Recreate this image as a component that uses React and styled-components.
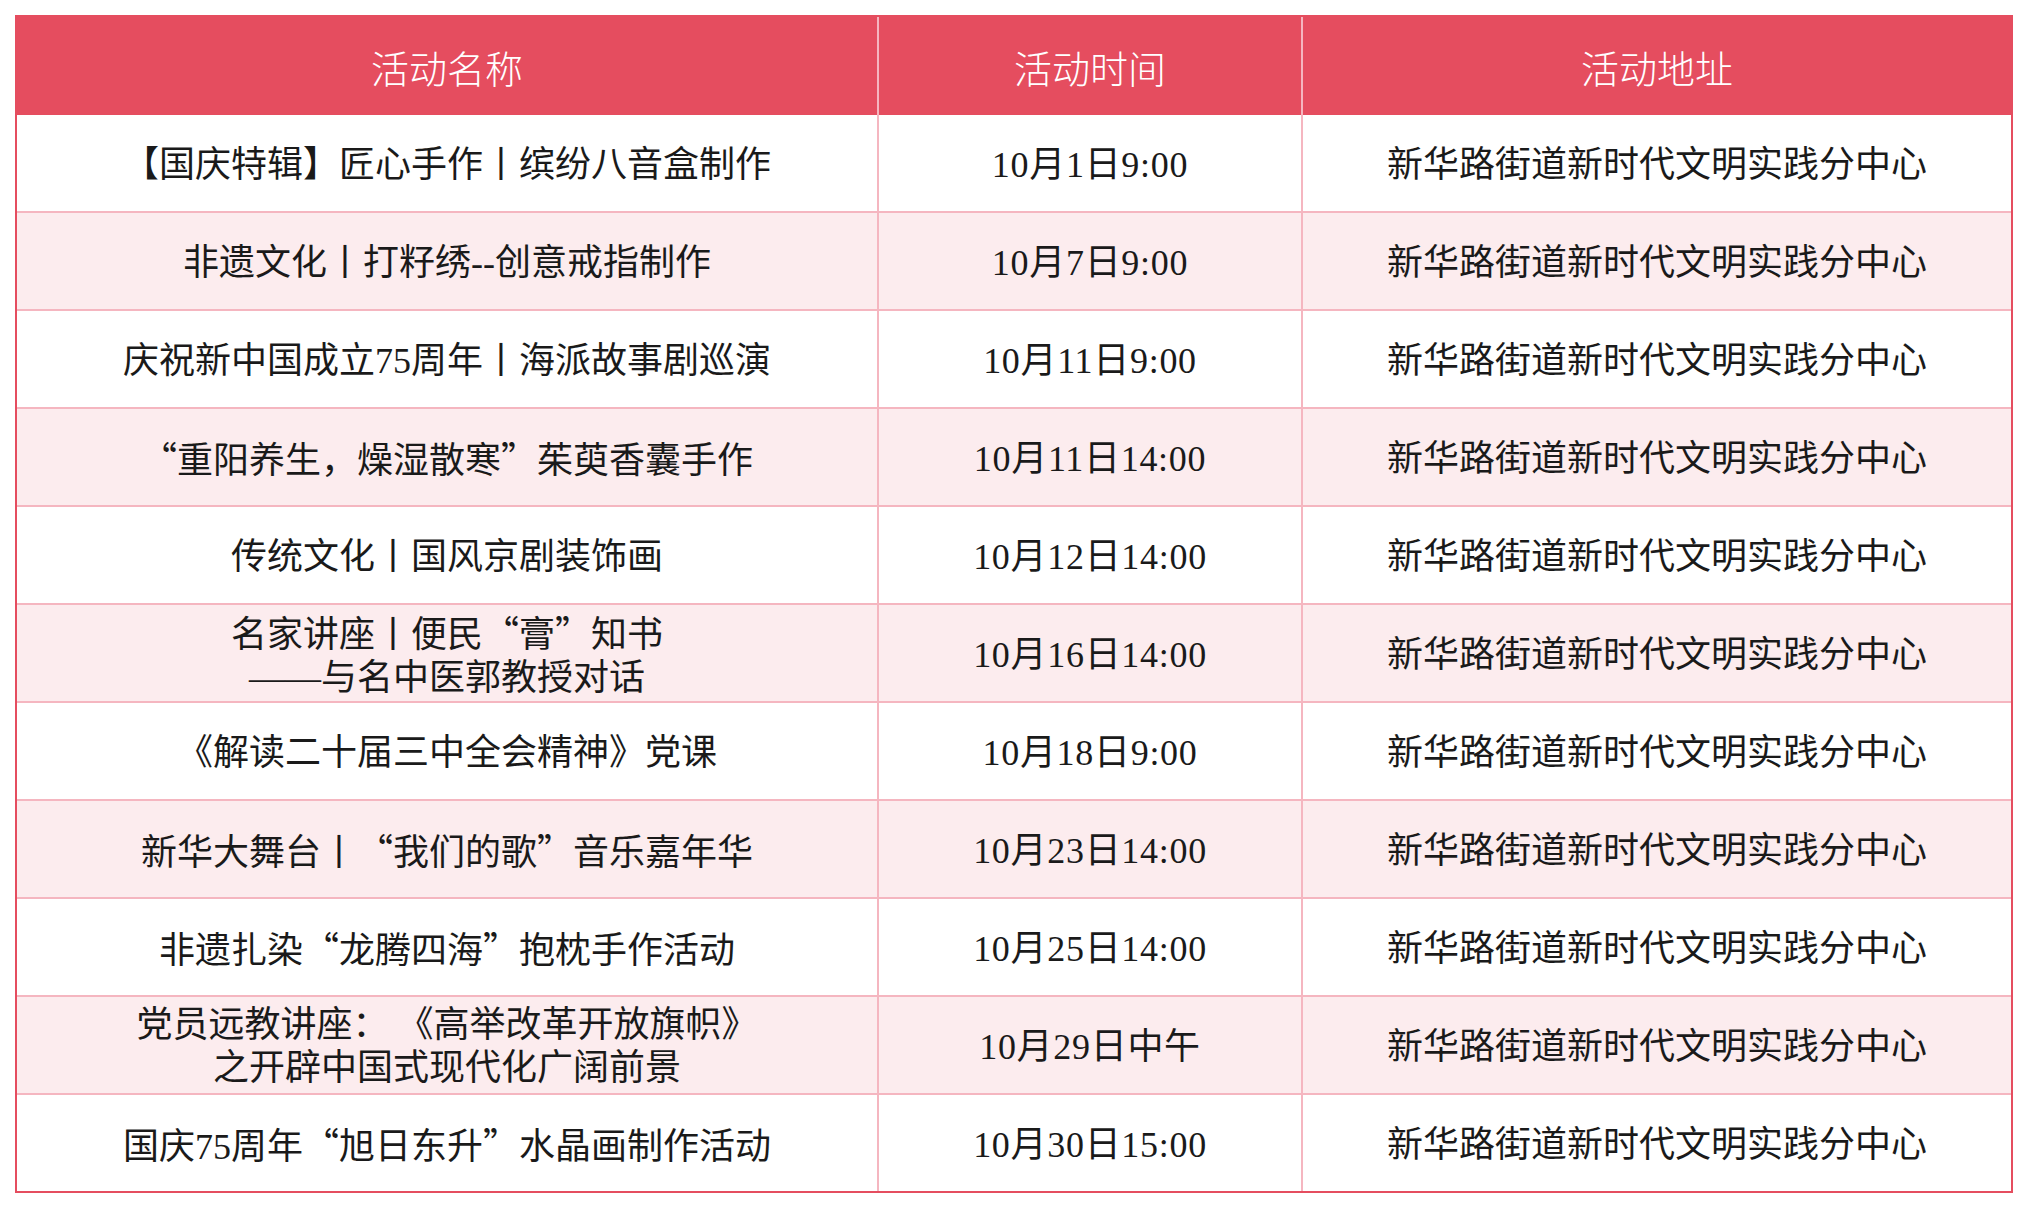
import React from 'react';
import styled, { createGlobalStyle } from 'styled-components';

const GlobalStyle = createGlobalStyle`
  body {
    margin: 0;
    background: #fff;
    font-family: "Liberation Serif", "Noto Sans CJK SC", serif;
  }
`;

const Page = styled.div`
  padding: 15px;
`;

const Table = styled.div`
  width: 1998px;
  box-sizing: border-box;
  border: 2px solid #e54d5f;
`;

const Row = styled.div`
  display: grid;
  grid-template-columns: 860px 422px 708px;
  column-gap: 2px;
  background: #f5b6c0; /* pink grid lines */
`;

const HeadCell = styled.div`
  height: 98px;
  background: #e54d5f;
  color: #fff;
  display: flex;
  align-items: center;
  justify-content: center;
  font-size: 38px;
  font-weight: 300;
  font-family: "Noto Sans CJK SC", sans-serif;
`;

const Body = styled.div`
  display: flex;
  flex-direction: column;
  gap: 2px;
  background: #f5b6c0;
`;

const Cell = styled.div`
  height: 96px;
  box-sizing: border-box;
  padding-top: 4px;
  background: ${(p) => (p.$alt ? '#fcecee' : '#fff')};
  color: #1a1a1a;
  display: flex;
  flex-direction: column;
  align-items: center;
  justify-content: center;
  text-align: center;
  font-family: "Liberation Serif", "Noto Sans CJK SC", serif;
  font-size: 36px;
  font-weight: 400;
  line-height: 43px;
  letter-spacing: ${(p) => (p.$time ? '0.7px' : '0')};
`;

const Quote = styled.span`
  font-family: "Noto Sans CJK SC", sans-serif;
`;

const rows = [
  [['【国庆特辑】匠心手作丨缤纷八音盒制作'], '10月1日9:00'],
  [['非遗文化丨打籽绣--创意戒指制作'], '10月7日9:00'],
  [['庆祝新中国成立75周年丨海派故事剧巡演'], '10月11日9:00'],
  [['“重阳养生，燥湿散寒”茱萸香囊手作'], '10月11日14:00'],
  [['传统文化丨国风京剧装饰画'], '10月12日14:00'],
  [['名家讲座丨便民“膏”知书', '——与名中医郭教授对话'], '10月16日14:00'],
  [['《解读二十届三中全会精神》党课'], '10月18日9:00'],
  [['新华大舞台丨“我们的歌”音乐嘉年华'], '10月23日14:00'],
  [['非遗扎染“龙腾四海”抱枕手作活动'], '10月25日14:00'],
  [['党员远教讲座： 《高举改革开放旗帜》', '之开辟中国式现代化广阔前景'], '10月29日中午'],
  [['国庆75周年“旭日东升”水晶画制作活动'], '10月30日15:00'],
];

const place = '新华路街道新时代文明实践分中心';

// wrap curly quotes so they take the full-width CJK glyphs
function withQuotes(text) {
  return text.split(/([“”])/).map((part, i) =>
    part === '“' || part === '”' ? <Quote key={i}>{part}</Quote> : part
  );
}

function App() {
  return (
    <Page>
      <GlobalStyle />
      <Table>
        <Row>
          <HeadCell>活动名称</HeadCell>
          <HeadCell>活动时间</HeadCell>
          <HeadCell>活动地址</HeadCell>
        </Row>
        <Body>
          {rows.map(([name, time], i) => (
            <Row key={i}>
              <Cell $alt={i % 2 === 1}>
                {name.map((line) => (
                  <div key={line}>{withQuotes(line)}</div>
                ))}
              </Cell>
              <Cell $alt={i % 2 === 1} $time>{time}</Cell>
              <Cell $alt={i % 2 === 1}>{place}</Cell>
            </Row>
          ))}
        </Body>
      </Table>
    </Page>
  );
}

export default App;
